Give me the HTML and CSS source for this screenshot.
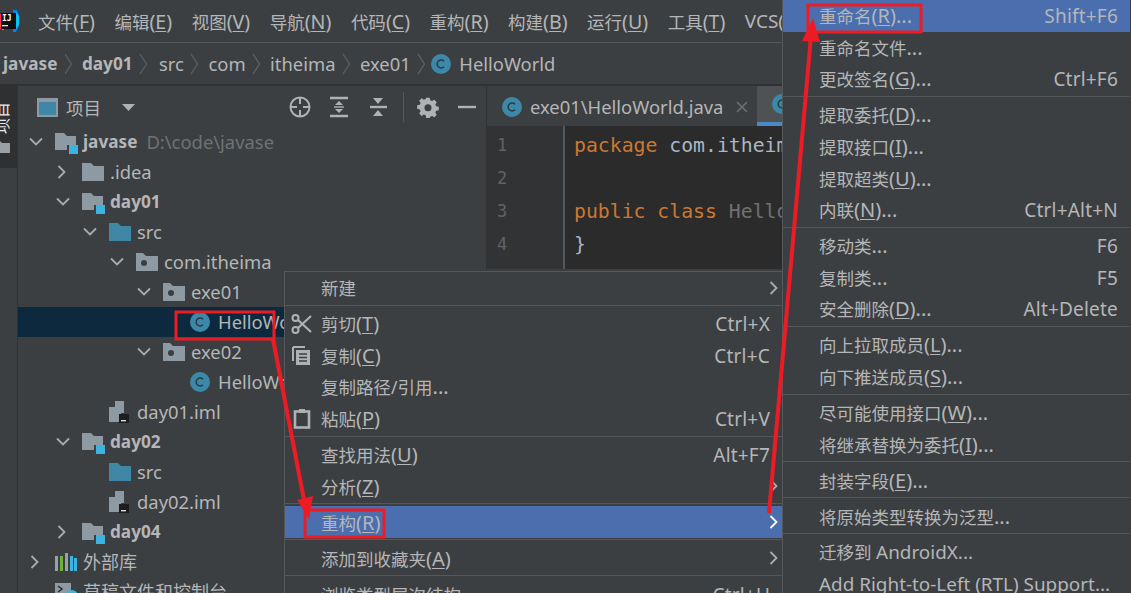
FILE: index.html
```html
<!DOCTYPE html>
<html lang="zh">
<head>
<meta charset="utf-8">
<title>IDEA</title>
<link rel="stylesheet" href="styles.css">
</head>
<body>
<svg class="defs" width="0" height="0">
  <symbol id="folder" viewBox="0 0 22 18"><path d="M0 0h9l3 3h10v15H0z"/></symbol>
  <symbol id="module" viewBox="0 0 24 22"><path fill="#8d9aa3" d="M0 0h9l3 3h9v9h-9v5H0z"/><rect x="14" y="12" width="9" height="9" fill="#3db3e2"/></symbol>
  <symbol id="package" viewBox="0 0 22 18"><path fill="#8d9aa3" d="M0 0h7l3 3h12v15H0z"/><circle cx="8" cy="10" r="3" fill="#3c3f41"/></symbol>
  <symbol id="cls" viewBox="0 0 20 20"><circle cx="10" cy="10" r="10" fill="#3c88a8"/><path d="M13 7.2a4 4 0 1 0 0 5.6" fill="none" stroke="#2b3a42" stroke-width="1.5"/></symbol>
  <symbol id="iml" viewBox="0 0 20 22"><path fill="#8d9aa3" d="M6 0h9v12h-3v9H0V6h6z"/><rect x="10" y="13" width="10" height="9" fill="#1d1d1d"/><rect x="12" y="19" width="5" height="1.4" fill="#ddd"/></symbol>
  <symbol id="chev-down" viewBox="0 0 14 10"><path d="M1 1.5l6 6 6-6" fill="none" stroke="#a9acae" stroke-width="1.8"/></symbol>
  <symbol id="chev-right" viewBox="0 0 10 14"><path d="M1.5 1l6 6-6 6" fill="none" stroke="#a9acae" stroke-width="1.8"/></symbol>
  <symbol id="chev-right-w" viewBox="0 0 10 14"><path d="M1.5 1l6 6-6 6" fill="none" stroke="#ffffff" stroke-width="1.8"/></symbol>
  <symbol id="crumb" viewBox="0 0 9 22"><path d="M1 1l6.5 10L1 21" fill="none" stroke="#5f6366" stroke-width="1.2"/></symbol>
</svg>

<div class="app">
  <header class="menubar">
    <svg class="logo" viewBox="0 0 20 24" width="20" height="24">
      <path fill="#fe2857" d="M0 5h4v15H0z"/>
      <path fill="#fb7d1a" d="M0 15l4-2v8H2z"/>
      <path fill="#087cfa" d="M13 1h4l2 5v11l-3 6h-3z"/>
      <path fill="#07c3f2" d="M16 3l3 4v9l-3 4z"/>
      <rect x="1" y="4" width="15" height="16" fill="#0f0f12"/>
      <text x="2" y="12" class="logo-text">IJ</text>
      <rect x="2" y="16" width="6" height="1.3" fill="#e5e5e5"/>
    </svg>
    <span>文件<span class="lat">(<u>F</u>)</span></span>
    <span>编辑<span class="lat">(<u>E</u>)</span></span>
    <span>视图<span class="lat">(<u>V</u>)</span></span>
    <span>导航<span class="lat">(<u>N</u>)</span></span>
    <span>代码<span class="lat">(<u>C</u>)</span></span>
    <span>重构<span class="lat">(<u>R</u>)</span></span>
    <span>构建<span class="lat">(<u>B</u>)</span></span>
    <span>运行<span class="lat">(<u>U</u>)</span></span>
    <span>工具<span class="lat">(<u>T</u>)</span></span>
    <span class="en">VCS(<u>S</u>)</span>
  </header>

  <nav class="crumbs">
    <b>javase</b><svg class="crumb-sep"><use href="#crumb"/></svg>
    <b>day01</b><svg class="crumb-sep"><use href="#crumb"/></svg>
    <span>src</span><svg class="crumb-sep"><use href="#crumb"/></svg>
    <span>com</span><svg class="crumb-sep"><use href="#crumb"/></svg>
    <span>itheima</span><svg class="crumb-sep"><use href="#crumb"/></svg>
    <span>exe01</span><svg class="crumb-sep"><use href="#crumb"/></svg>
    <svg class="i-cls crumb-icon"><use href="#cls"/></svg>
    <span>HelloWorld</span>
  </nav>

  <main class="main">
    <aside class="stripe">
      <div class="stripe-tab">
        <span class="stripe-text">项目</span>
        <svg class="stripe-folder" viewBox="0 0 16 12"><path d="M0 0h6l2 2h8v10H0z" fill="#9aa0a4"/></svg>
      </div>
    </aside>

    <section class="project">
      <div class="panel-head">
        <svg class="view-icon" viewBox="0 0 21 19"><rect x="0" y="0" width="21" height="19" fill="#8d9aa3"/><rect x="2" y="4" width="17" height="13" fill="#3f87a5"/></svg>
        <span class="panel-title">项目</span>
        <svg class="tri" viewBox="0 0 13 7"><path d="M0 0h13L6.500 7z" fill="#afb1b3"/></svg>
        <div class="tools">
          <svg class="tool" viewBox="0 0 22 22"><circle cx="11" cy="11" r="9.500" fill="none" stroke="#afb1b3" stroke-width="2"/><path d="M11 1v7M11 14v7M1 11h7M14 11h7" stroke="#afb1b3" stroke-width="2"/></svg>
          <svg class="tool" viewBox="0 0 22 22"><path d="M2 2h18M2 20h18" stroke="#afb1b3" stroke-width="2.400"/><path d="M11 5l4 4H7zM11 17l-4-4h8z" fill="#afb1b3"/><path d="M6 11h10" stroke="#afb1b3" stroke-width="1.400"/></svg>
          <svg class="tool" viewBox="0 0 22 22"><path d="M3 11h17" stroke="#afb1b3" stroke-width="2.400"/><path d="M11 8L6 2h10zM11 14l5 6H6z" fill="#afb1b3"/></svg>
          <i class="tool-sep"></i>
          <svg class="tool" viewBox="0 0 22 22"><path fill="#afb1b3" fill-rule="evenodd" d="M9 1h4l.6 3 2 .9 2.600-1.600 2.800 2.800-1.600 2.600.9 2 3 .6v4l-3 .6-.9 2 1.600 2.600-2.800 2.800-2.600-1.600-2 .9L13 24H9l-.6-3-2-.9-2.600 1.600L1 18.900l1.600-2.600-.9-2-3-.6v-4l3-.6.9-2L1 4.500 3.800 1.700l2.600 1.600 2-.9zM11 8.500a4 4 0 1 0 0 8 4 4 0 0 0 0-8z" transform="translate(1.300 .8) scale(.88)"/></svg>
          <svg class="tool" viewBox="0 0 22 22"><path d="M2 11h18" stroke="#afb1b3" stroke-width="2.400"/></svg>
        </div>
      </div>

      <ul class="tree">
        <li class="row l0"><svg class="chev"><use href="#chev-down"/></svg><svg class="i-mod"><use href="#module"/></svg><b>javase</b><span class="path">D:\code\javase</span></li>
        <li class="row l1"><svg class="chev-r"><use href="#chev-right"/></svg><svg class="i-dir gray"><use href="#folder"/></svg><span>.idea</span></li>
        <li class="row l1"><svg class="chev"><use href="#chev-down"/></svg><svg class="i-mod"><use href="#module"/></svg><b>day01</b></li>
        <li class="row l2"><svg class="chev"><use href="#chev-down"/></svg><svg class="i-dir teal"><use href="#folder"/></svg><span>src</span></li>
        <li class="row l3"><svg class="chev"><use href="#chev-down"/></svg><svg class="i-dir"><use href="#package"/></svg><span>com.itheima</span></li>
        <li class="row l4"><svg class="chev"><use href="#chev-down"/></svg><svg class="i-dir"><use href="#package"/></svg><span>exe01</span></li>
        <li class="row l5 selected"><span class="chev-gap"></span><svg class="i-cls"><use href="#cls"/></svg><span>HelloWorld</span></li>
        <li class="row l4"><svg class="chev"><use href="#chev-down"/></svg><svg class="i-dir"><use href="#package"/></svg><span>exe02</span></li>
        <li class="row l5"><span class="chev-gap"></span><svg class="i-cls"><use href="#cls"/></svg><span>HelloWorld</span></li>
        <li class="row l2"><span class="chev-gap"></span><svg class="i-iml"><use href="#iml"/></svg><span>day01.iml</span></li>
        <li class="row l1"><svg class="chev"><use href="#chev-down"/></svg><svg class="i-mod"><use href="#module"/></svg><b>day02</b></li>
        <li class="row l2"><span class="chev-gap"></span><svg class="i-dir teal"><use href="#folder"/></svg><span>src</span></li>
        <li class="row l2"><span class="chev-gap"></span><svg class="i-iml"><use href="#iml"/></svg><span>day02.iml</span></li>
        <li class="row l1"><svg class="chev-r"><use href="#chev-right"/></svg><svg class="i-mod"><use href="#module"/></svg><b>day04</b></li>
        <li class="row l0"><svg class="chev-r"><use href="#chev-right"/></svg><svg class="i-lib" viewBox="0 0 22 18"><path fill="#9aa0a4" d="M0 3h3v15H0zM10 0h3v18h-3z"/><path fill="#6cb33e" d="M5 3h3v15H5z"/><path fill="#3db3e2" d="M15 3h3v15h-3zM19 5h3v13h-3z"/></svg><span class="zh">外部库</span></li>
        <li class="row l0"><span class="chev-gap"></span><svg class="i-scratch" viewBox="0 0 22 18"><path fill="#8d9aa3" d="M0 0h16v18H0z"/><path d="M3 3l4 3-4 3" fill="none" stroke="#2b2b2b" stroke-width="1.500"/><circle cx="17" cy="13" r="6" fill="#3db3e2"/></svg><span class="zh">草稿文件和控制台</span></li>
      </ul>
    </section>

    <section class="editor">
      <div class="tabs">
        <div class="tab"><svg class="i-cls"><use href="#cls"/></svg><span class="tab-name">exe01\HelloWorld.java</span><svg class="close" viewBox="0 0 12 12"><path d="M1 1l10 10M11 1L1 11" stroke="#6e7173" stroke-width="1.500"/></svg></div>
        <div class="tab active"><svg class="i-cls"><use href="#cls"/></svg></div>
      </div>
      <div class="code-area">
        <div class="gutter"><span>1</span><span>2</span><span>3</span><span>4</span></div>
        <pre class="code"><span class="kw">package</span> <span class="pkg">com.itheima;</span>

<span class="kw">public class</span> <span class="cn">HelloWorld {</span>
<span class="pkg">}</span></pre>
      </div>
    </section>
  </main>

  <div class="menu menu-a">
    <div class="item"><span class="label">新建</span><svg class="arrow"><use href="#chev-right"/></svg></div>
    <div class="sep"></div>
    <div class="item"><svg class="mi" viewBox="0 0 22 22"><circle cx="4.500" cy="5" r="3" fill="none" stroke="#afb1b3" stroke-width="2"/><circle cx="4.500" cy="17" r="3" fill="none" stroke="#afb1b3" stroke-width="2"/><path d="M7 7l13 12M7 15L20 3" stroke="#afb1b3" stroke-width="2.200"/></svg><span class="label">剪切<span class="lat">(<u>T</u>)</span></span><span class="key">Ctrl+X</span><i class="slot"></i></div>
    <div class="item"><svg class="mi" viewBox="0 0 22 22"><path d="M2 2v14" stroke="#afb1b3" stroke-width="2"/><path d="M2 2h12" stroke="#afb1b3" stroke-width="2"/><path fill="#afb1b3" d="M5 5h14v15H5z"/><path d="M8 9h8M8 12.500h8M8 16h8" stroke="#3c3f41" stroke-width="1.300"/></svg><span class="label">复制<span class="lat">(<u>C</u>)</span></span><span class="key">Ctrl+C</span><i class="slot"></i></div>
    <div class="item"><span class="label">复制路径/引用<span class="lat">...</span></span></div>
    <div class="item"><svg class="mi" viewBox="0 0 22 22"><rect x="4" y="3.500" width="14" height="16" fill="none" stroke="#afb1b3" stroke-width="2.600"/><rect x="8" y="1" width="6" height="4" fill="#afb1b3"/></svg><span class="label">粘贴<span class="lat">(<u>P</u>)</span></span><span class="key">Ctrl+V</span><i class="slot"></i></div>
    <div class="sep"></div>
    <div class="item"><span class="label">查找用法<span class="lat">(<u>U</u>)</span></span><span class="key">Alt+F7</span><i class="slot"></i></div>
    <div class="item"><span class="label">分析<span class="lat">(<u>Z</u>)</span></span><svg class="arrow"><use href="#chev-right"/></svg></div>
    <div class="sep"></div>
    <div class="item on"><span class="label">重构<span class="lat">(<u>R</u>)</span></span><svg class="arrow"><use href="#chev-right-w"/></svg></div>
    <div class="sep"></div>
    <div class="item"><span class="label">添加到收藏夹<span class="lat">(<u>A</u>)</span></span><svg class="arrow"><use href="#chev-right"/></svg></div>
    <div class="sep"></div>
    <div class="item"><span class="label">浏览类型层次结构</span><span class="key">Ctrl+U</span><i class="slot"></i></div>
  </div>

  <div class="menu menu-b">
    <div class="item on"><span class="label">重命名<span class="lat">(<u>R</u>)...</span></span><span class="key">Shift+F6</span></div>
    <div class="item"><span class="label">重命名文件<span class="lat">...</span></span></div>
    <div class="item"><span class="label">更改签名<span class="lat">(<u>G</u>)...</span></span><span class="key">Ctrl+F6</span></div>
    <div class="sep"></div>
    <div class="item"><span class="label">提取委托<span class="lat">(<u>D</u>)...</span></span></div>
    <div class="item"><span class="label">提取接口<span class="lat">(<u>I</u>)...</span></span></div>
    <div class="item"><span class="label">提取超类<span class="lat">(<u>U</u>)...</span></span></div>
    <div class="item"><span class="label">内联<span class="lat">(<u>N</u>)...</span></span><span class="key">Ctrl+Alt+N</span></div>
    <div class="sep"></div>
    <div class="item"><span class="label">移动类<span class="lat">...</span></span><span class="key">F6</span></div>
    <div class="item"><span class="label">复制类<span class="lat">...</span></span><span class="key">F5</span></div>
    <div class="item"><span class="label">安全删除<span class="lat">(<u>D</u>)...</span></span><span class="key">Alt+Delete</span></div>
    <div class="sep"></div>
    <div class="item"><span class="label">向上拉取成员<span class="lat">(<u>L</u>)...</span></span></div>
    <div class="item"><span class="label">向下推送成员<span class="lat">(<u>S</u>)...</span></span></div>
    <div class="sep"></div>
    <div class="item"><span class="label">尽可能使用接口<span class="lat">(<u>W</u>)...</span></span></div>
    <div class="item"><span class="label">将继承替换为委托<span class="lat">(<u>I</u>)...</span></span></div>
    <div class="sep"></div>
    <div class="item"><span class="label">封装字段<span class="lat">(<u>E</u>)...</span></span></div>
    <div class="sep"></div>
    <div class="item"><span class="label">将原始类型转换为泛型<span class="lat">...</span></span></div>
    <div class="sep"></div>
    <div class="item"><span class="label">迁移到 <span class="en">AndroidX...</span></span></div>
    <div class="item"><span class="label en">Add Right-to-Left (RTL) Support...</span></div>
  </div>

  <svg class="marks" viewBox="0 0 1131 593" width="1131" height="593">
    <rect x="176" y="312" width="98" height="27"/>
    <rect x="305" y="510" width="79" height="27"/>
    <rect x="808" y="5" width="113" height="27"/>
    <path class="line" d="M273 339L305 505"/>
    <path class="head" d="M309 519L297 500 313 496z"/>
    <path class="line" d="M769 513L811 36"/>
    <path class="head" d="M813 18L802 41 820 42z"/>
  </svg>
</div>
</body>
</html>
```

FILE: styles.css
```css
* { box-sizing: border-box; }
html, body { margin: 0; padding: 0; }
body {
  background: #3c3f41;
  color: #b4b6b8;
  font-family: "Noto Sans", "Noto Sans CJK SC", sans-serif;
  font-size: 17.5px;
}
.defs { position: absolute; }
u { text-underline-offset: 2px; text-decoration-thickness: 1px; }
.lat { font-size: 20px; }
.en { font-size: 18.9px; }

.app {
  position: relative;
  width: 1131px;
  height: 593px;
  overflow: hidden;
  display: flex;
  flex-direction: column;
}

/* top bars */
.menubar {
  flex: 0 0 43px;
  display: flex;
  align-items: center;
  gap: 19.500px;
  white-space: nowrap;
  border-bottom: 1px solid #55585a;
}
.menubar .lat { font-size: 19.6px; }
.logo { flex: none; margin-right: -1.500px; }
.logo-text { font: bold 8px "DejaVu Sans Mono", monospace; fill: #fff; }

.crumbs {
  flex: 0 0 43px;
  display: flex;
  align-items: center;
  padding-left: 3px;
  white-space: nowrap;
  font-size: 18.4px;
  border-bottom: 2px solid #2f3133;
}
.crumbs b { font-weight: 700; font-size: 17.200px; }
.crumbs b + .crumb-sep + span { margin-left: 2px; }
.crumb-sep { width: 9px; height: 22px; margin: 0 9px 0 6.500px; flex: none; }
.crumb-icon { margin: 0 7px 0 -4px; }

/* main */
.main { flex: 1; display: flex; min-height: 0; }
.stripe { flex: 0 0 18px; border-right: 1px solid #323232; }
.stripe-tab {
  height: 82px;
  width: 17px;
  background: #2e3032;
  overflow: hidden;
  display: flex;
  flex-direction: column;
}
.stripe-text {
  writing-mode: vertical-rl;
  text-orientation: sideways;
  transform: rotate(180deg);
  color: #e8e8e8;
  margin: 14px 0 0 -7px;
  font-size: 16px;
  line-height: 18px;
  width: 18px;
  height: 34px;
}
.stripe-folder { width: 16px; height: 12px; margin: 7px 0 0 -6px; }

.project { flex: 0 0 469px; border-right: 1px solid #323232; min-width: 0; }
.panel-head { height: 41px; display: flex; align-items: center; padding: 1px 0 0 19px; }
.view-icon { width: 21px; height: 19px; margin-right: 8px; }
.panel-title { width: 56px; }
.tri { width: 13px; height: 7px; }
.tools { margin-left: 154px; display: flex; align-items: center; gap: 17px; }
.tool { width: 22px; height: 22px; flex: none; }
.tool-sep { width: 1px; height: 30px; background: #55585a; margin: 0 -4px 0 -3px; }

.tree { list-style: none; margin: 0; padding: 0; font-size: 18.4px; }
.row { height: 30px; display: flex; align-items: center; white-space: nowrap; overflow: hidden; }
.row > span:not(.chev-gap), .row > b { line-height: 30px; }
.row.selected { background: #0d293e; }
.l0 { padding-left: 11px; }
.l1 { padding-left: 38px; }
.l2 { padding-left: 65px; }
.l3 { padding-left: 92px; }
.l4 { padding-left: 119px; }
.l5 { padding-left: 146px; }
.chev { width: 14px; height: 10px; margin-right: 12px; flex: none; }
.chev-r { width: 10px; height: 14px; margin: 0 15px 0 1px; flex: none; }
.chev-gap { width: 26px; flex: none; }
.i-mod { width: 24px; height: 22px; margin: 3px 4px 0 0; flex: none; align-self: center; }
.i-dir { width: 22px; height: 18px; margin-right: 6px; flex: none; }
.i-cls { width: 20px; height: 20px; margin-right: 8px; flex: none; }
.i-iml { width: 20px; height: 22px; margin-right: 8px; flex: none; }
.i-lib, .i-scratch { width: 22px; height: 18px; margin-right: 6px; flex: none; }
.gray { fill: #8d9aa3; }
.teal { fill: #3f87a5; }
.path { color: #6f7274; margin-left: 9px; }
.row b { font-weight: 700; font-size: 17.200px; }
.zh { font-size: 18px; }

/* editor */
.editor { flex: 1; min-width: 0; display: flex; flex-direction: column; font-size: 18.4px; }
.tabs { height: 40px; display: flex; flex: none; padding-top: 1px; }
.tab { display: flex; align-items: center; padding-left: 15px; white-space: nowrap; }
.tab:first-child { width: 270px; }
.tab-name { width: 206px; }
.close { width: 12px; height: 12px; }
.tab.active { flex: 1; background: #4e5254; border-bottom: 4px solid #4a88c7; overflow: hidden; margin-top: -1px; }
.code-area { display: flex; background: #2b2b2b; height: 143px; }
.gutter {
  width: 78px;
  flex: none;
  background: #313335;
  border-right: 2px solid #55585a;
  display: flex;
  flex-direction: column;
  padding: 3px 0 0 10px;
  color: #606366;
  font: 17px/33px "DejaVu Sans Mono", monospace;
}
.code {
  margin: 0;
  padding: 3px 0 0 9px;
  font: 19.8px/33px "DejaVu Sans Mono", monospace;
  white-space: pre;
  overflow: hidden;
}
.kw { color: #cc7832; }
.pkg { color: #a9b7c6; }
.cn { color: #6f7274; }

/* context menus */
.menu {
  position: absolute;
  background: #3c3f41;
  border: 1px solid #55585a;
  white-space: nowrap;
}
.menu-a { left: 284px; top: 271px; width: 499px; height: 340px; }
.menu-b { left: 782px; top: 0; width: 360px; height: 620px; border-top: 0; padding-right: 11px; }
.item {
  height: 31.6px;
  display: flex;
  align-items: center;
  padding-left: 36px;
  padding-right: 3px;
  position: relative;
}
.menu-b .item { padding-right: 12px; }
.item.on { background: #4b6eaf; }
.label { flex: 1; }
.key { font-size: 19px; letter-spacing: .2px; padding-top: 1px; }
.sep { height: 4.400px; padding-top: 1.500px; }
.sep::before { content: ""; display: block; height: 1px; background: #55585a; }
.slot { width: 9px; flex: none; }
.arrow { width: 10px; height: 14px; margin-left: 2px; flex: none; }
.mi { position: absolute; left: 6px; top: 5px; width: 22px; height: 22px; }

/* red annotations over the screenshot */
.marks { position: absolute; left: 0; top: 0; pointer-events: none; }
.marks rect { fill: none; stroke: #ed1c24; stroke-width: 3; }
.marks .line { fill: none; stroke: #ed1c24; stroke-width: 4; }
.marks .head { fill: #ed1c24; }
```
